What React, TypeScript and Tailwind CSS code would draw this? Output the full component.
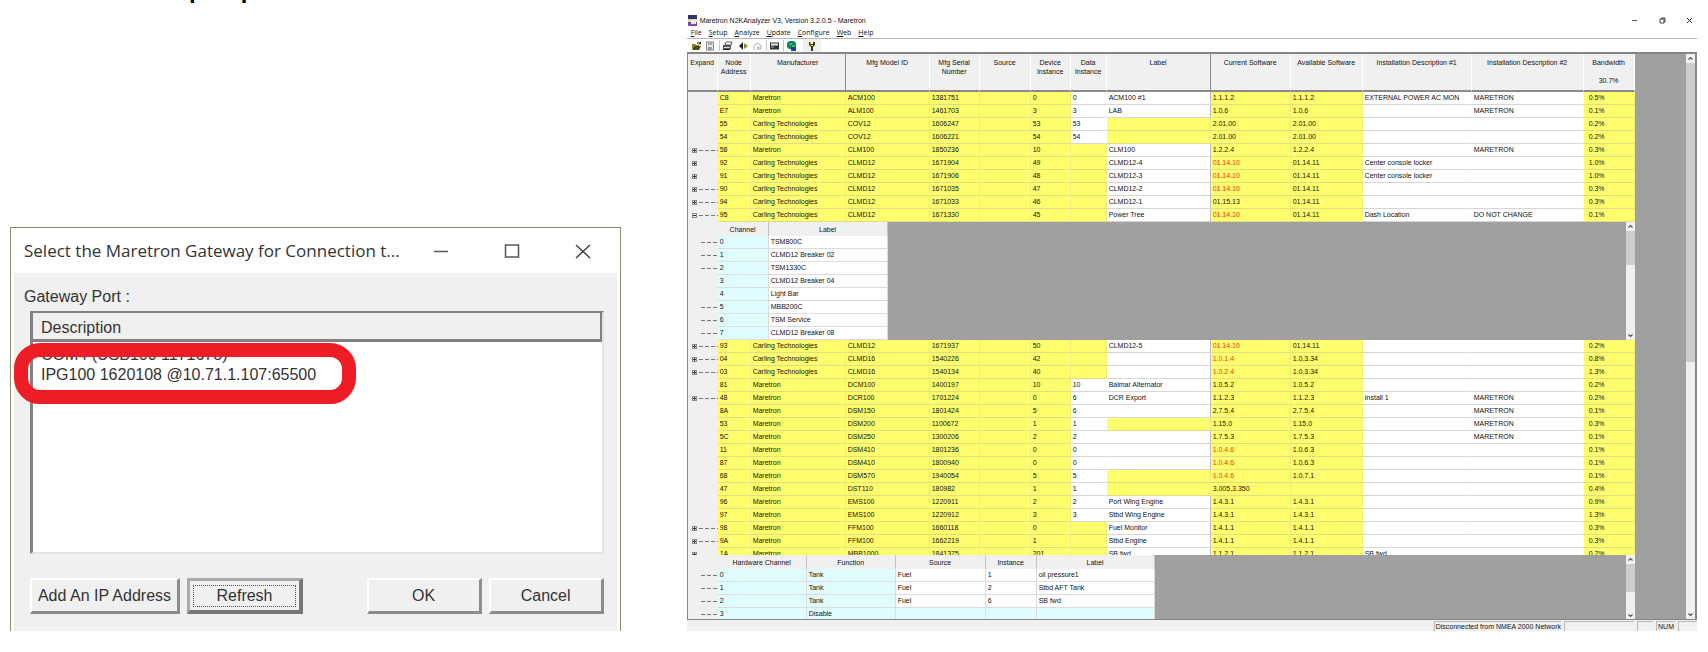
import { useState } from 'react'
import type { ReactNode } from 'react'
import clsx from 'clsx'

interface Device {
  addr: string
  maker: string
  model: string
  serial: string
  device: string
  data: string | null
  label: string | null
  current: string
  available: string
  desc1?: string
  desc2?: string
  bandwidth: string
  outdated?: boolean
  expand?: 'plus' | 'minus'
  line?: boolean
}

const M = 'Maretron'
const C = 'Carling Technologies'

// data / label: null means the field does not apply to the device
const DEVICES_TOP: Device[] = [
  { addr: 'C8', maker: M, model: 'ACM100', serial: '1381751', device: '0', data: '0', label: 'ACM100 #1', current: '1.1.1.2', available: '1.1.1.2', desc1: 'EXTERNAL POWER AC MON', desc2: 'MARETRON', bandwidth: '0.5%' },
  { addr: 'E7', maker: M, model: 'ALM100', serial: '1461703', device: '3', data: '3', label: 'LAB', current: '1.0.6', available: '1.0.6', desc2: 'MARETRON', bandwidth: '0.1%' },
  { addr: '55', maker: C, model: 'COV12', serial: '1606247', device: '53', data: '53', label: null, current: '2.01.00', available: '2.01.00', bandwidth: '0.2%' },
  { addr: '54', maker: C, model: 'COV12', serial: '1606221', device: '54', data: '54', label: null, current: '2.01.00', available: '2.01.00', bandwidth: '0.2%' },
  { addr: '58', maker: M, model: 'CLM100', serial: '1850236', device: '10', data: null, label: 'CLM100', current: '1.2.2.4', available: '1.2.2.4', desc2: 'MARETRON', bandwidth: '0.3%', expand: 'plus', line: true },
  { addr: '92', maker: C, model: 'CLMD12', serial: '1671904', device: '49', data: null, label: 'CLMD12-4', current: '01.14.10', available: '01.14.11', desc1: 'Center console locker', bandwidth: '1.0%', outdated: true, expand: 'plus' },
  { addr: '91', maker: C, model: 'CLMD12', serial: '1671906', device: '48', data: null, label: 'CLMD12-3', current: '01.14.10', available: '01.14.11', desc1: 'Center console locker', bandwidth: '1.0%', outdated: true, expand: 'plus' },
  { addr: '90', maker: C, model: 'CLMD12', serial: '1671035', device: '47', data: null, label: 'CLMD12-2', current: '01.14.10', available: '01.14.11', bandwidth: '0.3%', outdated: true, expand: 'plus', line: true },
  { addr: '94', maker: C, model: 'CLMD12', serial: '1671033', device: '46', data: null, label: 'CLMD12-1', current: '01.15.13', available: '01.14.11', bandwidth: '0.3%', expand: 'plus', line: true },
  { addr: '95', maker: C, model: 'CLMD12', serial: '1671330', device: '45', data: null, label: 'Power Tree', current: '01.14.10', available: '01.14.11', desc1: 'Dash Location', desc2: 'DO NOT CHANGE', bandwidth: '0.1%', outdated: true, expand: 'minus', line: true },
]

const DEVICES_BOTTOM: Device[] = [
  { addr: '93', maker: C, model: 'CLMD12', serial: '1671937', device: '50', data: null, label: 'CLMD12-5', current: '01.14.10', available: '01.14.11', bandwidth: '0.2%', outdated: true, expand: 'plus', line: true },
  { addr: '04', maker: C, model: 'CLMD16', serial: '1540226', device: '42', data: null, label: '', current: '1.0.1.4', available: '1.0.3.34', bandwidth: '0.8%', outdated: true, expand: 'plus', line: true },
  { addr: '03', maker: C, model: 'CLMD16', serial: '1540134', device: '40', data: null, label: '', current: '1.0.2.4', available: '1.0.3.34', bandwidth: '1.3%', outdated: true, expand: 'plus', line: true },
  { addr: '81', maker: M, model: 'DCM100', serial: '1400197', device: '10', data: '10', label: 'Balmar Alternator', current: '1.0.5.2', available: '1.0.5.2', bandwidth: '0.2%' },
  { addr: '48', maker: M, model: 'DCR100', serial: '1701224', device: '0', data: '6', label: 'DCR Export', current: '1.1.2.3', available: '1.1.2.3', desc1: 'Install 1', desc2: 'MARETRON', bandwidth: '0.2%', expand: 'plus', line: true },
  { addr: '8A', maker: M, model: 'DSM150', serial: '1801424', device: '5', data: '6', label: '', current: '2.7.5.4', available: '2.7.5.4', desc2: 'MARETRON', bandwidth: '0.1%' },
  { addr: '53', maker: M, model: 'DSM200', serial: '1100672', device: '1', data: '1', label: null, current: '1.15.0', available: '1.15.0', desc2: 'MARETRON', bandwidth: '0.3%' },
  { addr: '5C', maker: M, model: 'DSM250', serial: '1300206', device: '2', data: '2', label: '', current: '1.7.5.3', available: '1.7.5.3', desc2: 'MARETRON', bandwidth: '0.1%' },
  { addr: '11', maker: M, model: 'DSM410', serial: '1801236', device: '0', data: '0', label: '', current: '1.0.4.6', available: '1.0.6.3', bandwidth: '0.1%', outdated: true },
  { addr: '87', maker: M, model: 'DSM410', serial: '1800940', device: '0', data: '0', label: '', current: '1.0.4.6', available: '1.0.6.3', bandwidth: '0.1%', outdated: true },
  { addr: '68', maker: M, model: 'DSM570', serial: '1940054', device: '5', data: '5', label: null, current: '1.0.4.6', available: '1.0.7.1', bandwidth: '0.1%', outdated: true },
  { addr: '47', maker: M, model: 'DST110', serial: '180982', device: '1', data: '1', label: null, current: '3.005,3.350', available: '', bandwidth: '0.4%' },
  { addr: '96', maker: M, model: 'EMS100', serial: '1220911', device: '2', data: '2', label: 'Port Wing Engine', current: '1.4.3.1', available: '1.4.3.1', bandwidth: '0.9%' },
  { addr: '97', maker: M, model: 'EMS100', serial: '1220912', device: '3', data: '3', label: 'Stbd Wing Engine', current: '1.4.3.1', available: '1.4.3.1', bandwidth: '1.3%' },
  { addr: '98', maker: M, model: 'FFM100', serial: '1660118', device: '0', data: null, label: 'Fuel Monitor', current: '1.4.1.1', available: '1.4.1.1', bandwidth: '0.3%', expand: 'plus', line: true },
  { addr: '9A', maker: M, model: 'FFM100', serial: '1662219', device: '1', data: null, label: 'Stbd Engine', current: '1.4.1.1', available: '1.4.1.1', bandwidth: '0.3%', expand: 'plus', line: true },
  { addr: '1A', maker: M, model: 'MBB1000', serial: '1841375', device: '201', data: null, label: 'SB fwd', current: '1.1.2.1', available: '1.1.2.1', desc1: 'SB fwd', bandwidth: '0.2%', expand: 'plus' },
]

const COLUMNS = [
  { title: 'Expand', width: 'w-[30px]' },
  { title: 'Node Address', width: 'w-[33px]' },
  { title: 'Manufacturer', width: 'w-[95px]', dark: true },
  { title: 'Mfg Model ID', width: 'w-[84px]' },
  { title: 'Mfg Serial Number', width: 'w-[50px]' },
  { title: 'Source', width: 'w-[51px]' },
  { title: 'Device Instance', width: 'w-[40px]' },
  { title: 'Data Instance', width: 'w-[36px]' },
  { title: 'Label', width: 'w-[104px]', dark: true },
  { title: 'Current Software', width: 'w-[80px]' },
  { title: 'Available Software', width: 'w-[72px]' },
  { title: 'Installation Description #1', width: 'w-[109px]' },
  { title: 'Installation Description #2', width: 'w-[112px]' },
  { title: 'Bandwidth', width: 'w-[51px]' },
]

const BREAKERS = ['TSM800C', 'CLMD12 Breaker 02', 'TSM1330C', 'CLMD12 Breaker 04', 'Light Bar', 'MBB200C', 'TSM Service', 'CLMD12 Breaker 08']

const CHANNELS = [
  ['0', 'Tank', 'Fuel', '1', 'oil pressure1'],
  ['1', 'Tank', 'Fuel', '2', 'Stbd AFT Tank'],
  ['2', 'Tank', 'Fuel', '6', 'SB fwd'],
  ['3', 'Disable', '', '', ''],
]

const MENUS = ['File', 'Setup', 'Analyze', 'Update', 'Configure', 'Web', 'Help']
const PORTS = ['COM4 (USB100 1171678)', 'IPG100 1620108 @10.71.1.107:65500']

function Dashes() {
  return <span className="h-px flex-1 bg-[repeating-linear-gradient(90deg,#777_0_4px,transparent_4px_6px)]" />
}

function Expander({ kind, line }: { kind?: 'plus' | 'minus'; line?: boolean }) {
  if (!kind) return null
  return (
    <div className="flex items-center gap-[2px] pl-1">
      <button aria-label={kind === 'plus' ? 'Expand' : 'Collapse'} className="block">
        <svg width="5" height="5" viewBox="0 0 5 5" className="block" shapeRendering="crispEdges">
          <rect x="0" y="0" width="5" height="5" fill="#8a8a8a" />
          <rect x="1" y="1" width="3" height="3" fill="#f0f0f0" />
          <path d={kind === 'plus' ? 'M1 2h3v1H1zM2 1h1v3H2z' : 'M1 2h3v1H1z'} fill="#333" />
        </svg>
      </button>
      {line && <Dashes />}
    </div>
  )
}

function Arrow({ up }: { up?: boolean }) {
  return (
    <svg width="9" height="9" viewBox="0 0 9 9" className="block shrink-0">
      <path d={up ? 'M2.5 5.5l2-2 2 2' : 'M2.5 3.5l2 2 2-2'} fill="none" stroke="#555" strokeWidth="1.2" />
    </svg>
  )
}

function ScrollBar({ thumb }: { thumb: string }) {
  return (
    <div className="flex w-[9px] shrink-0 flex-col bg-[#f0f0f0]">
      <Arrow up />
      <div className={clsx('w-full bg-[#cdcdcd]', thumb)} />
      <div className="flex-1" />
      <Arrow />
    </div>
  )
}

const CELL = 'h-[13px] overflow-hidden border-r border-b border-r-white border-b-[#d6d6d6] p-0 pl-[2px] leading-[12px]'
const LABEL_CELL = 'h-[13px] overflow-hidden border-r border-b border-r-[#bdbdbd] border-b-[#d6d6d6] p-0 pl-[2px] leading-[12px]'
const YELLOW_CELL = 'h-[13px] overflow-hidden border-r border-b border-r-[#eeee78] border-b-[#dede84] bg-[#ffff6e] p-0 pl-[2px] leading-[12px]'

function DeviceRow({ d }: { d: Device }) {
  return (
    <tr>
      <td className="bg-[#f0f0f0] p-0">
        <Expander kind={d.expand} line={d.line} />
      </td>
      <td className={YELLOW_CELL}>{d.addr}</td>
      <td className={YELLOW_CELL}>{d.maker}</td>
      <td className={YELLOW_CELL}>{d.model}</td>
      <td className={YELLOW_CELL}>{d.serial}</td>
      <td className={YELLOW_CELL}></td>
      <td className={YELLOW_CELL}>{d.device}</td>
      <td className={d.data === null ? YELLOW_CELL : CELL}>{d.data}</td>
      <td className={d.label === null ? YELLOW_CELL : LABEL_CELL}>{d.label}</td>
      <td className={clsx(YELLOW_CELL, d.outdated && 'text-[#ff2a1a]')}>{d.current}</td>
      <td className={YELLOW_CELL}>{d.available}</td>
      <td className={CELL}>{d.desc1}</td>
      <td className={CELL}>{d.desc2}</td>
      <td className={YELLOW_CELL}>
        <span className="pl-[3px]">{d.bandwidth}</span>
      </td>
    </tr>
  )
}

function Columns() {
  return (
    <colgroup>
      {COLUMNS.map((c) => (
        <col key={c.title} className={c.width} />
      ))}
    </colgroup>
  )
}

const GRID = 'w-[947px] table-fixed border-separate border-spacing-0 whitespace-nowrap'
const SUB_HEAD = 'h-[14px] border-r border-[#c4c4c4] bg-[#f0f0f0] p-0 text-center font-normal'
const SUB_CELL = 'h-[13px] border-r border-b border-[#dcdcdc] p-0 pl-[2px] leading-[12px]'

function SubGrid({ children, thumb }: { children: ReactNode; thumb: string }) {
  return (
    <div className="flex w-[947px] bg-[#a0a0a0]">
      {children}
      <div className="flex-1" />
      <ScrollBar thumb={thumb} />
    </div>
  )
}

function BreakerGrid() {
  return (
    <SubGrid thumb="h-[34px]">
      <table className="w-[200px] table-fixed border-separate border-spacing-0 whitespace-nowrap">
        <thead>
          <tr>
            <td className="w-[30px] bg-[#f0f0f0] p-0"></td>
            <th className={clsx(SUB_HEAD, 'w-[51px] border-[#808080]')}>Channel</th>
            <th className={SUB_HEAD}>Label</th>
          </tr>
        </thead>
        <tbody>
          {BREAKERS.map((name, i) => (
            <tr key={name}>
              <td className="bg-[#f0f0f0] p-0">
                <div className="flex pr-px pl-[13px]">{i !== 3 && i !== 4 && <Dashes />}</div>
              </td>
              <td className={clsx(SUB_CELL, 'bg-[#dffdff]')}>{i}</td>
              <td className={clsx(SUB_CELL, 'bg-white')}>{name}</td>
            </tr>
          ))}
        </tbody>
      </table>
    </SubGrid>
  )
}

function ChannelGrid() {
  return (
    <SubGrid thumb="h-[28px]">
      <table className="w-[467px] table-fixed border-separate border-spacing-0 whitespace-nowrap">
        <thead>
          <tr>
            <td className="w-[30px] bg-[#f0f0f0] p-0"></td>
            <th className={clsx(SUB_HEAD, 'w-[89px] border-[#808080]')}>Hardware Channel</th>
            <th className={clsx(SUB_HEAD, 'w-[89px]')}>Function</th>
            <th className={clsx(SUB_HEAD, 'w-[90px]')}>Source</th>
            <th className={clsx(SUB_HEAD, 'w-[51px]')}>Instance</th>
            <th className={clsx(SUB_HEAD, 'border-[#808080]')}>Label</th>
          </tr>
        </thead>
        <tbody>
          {CHANNELS.map((row) => (
            <tr key={row[0]}>
              <td className="bg-[#f0f0f0] p-0">
                <div className="flex pr-px pl-[13px]">
                  <Dashes />
                </div>
              </td>
              {row.map((value, i) => (
                <td key={i} className={clsx(SUB_CELL, i < 2 || row[1] === 'Disable' ? 'bg-[#dffdff]' : 'bg-white')}>
                  {value}
                </td>
              ))}
            </tr>
          ))}
        </tbody>
      </table>
    </SubGrid>
  )
}

function ToolButton({ label, children }: { label: string; children: ReactNode }) {
  return (
    <button aria-label={label} className="flex h-[11px] w-[14px] items-center justify-center">
      <svg width="11" height="10" viewBox="0 0 11 10">
        {children}
      </svg>
    </button>
  )
}

function Separator() {
  return <span className="mx-px h-[11px] w-px bg-[#c8c8c8]" />
}

function ToolBar() {
  return (
    <div className="flex h-[13px] items-center pl-[3px]">
      <ToolButton label="Open">
        <path d="M1 3h3l1 1h3v1H3L1 8z" fill="#8a8420" />
        <path d="M3 5h7L8 9H1z" fill="#4d4a10" />
        <path d="M6 2.5q2-2 3.5 0M9.500 1v2h-2" fill="none" stroke="#222" />
      </ToolButton>
      <ToolButton label="Save">
        <rect x="1.500" y="1" width="7" height="8" fill="#e8e8e8" stroke="#8a8a8a" />
        <rect x="3" y="1" width="4" height="3" fill="#aaa" />
        <rect x="3" y="6" width="4" height="3" fill="#999" />
      </ToolButton>
      <Separator />
      <div className="flex gap-[2px]">
        <ToolButton label="Print">
          <path d="M4 1h6L9 4H3z" fill="#fff" stroke="#333" strokeWidth=".8" />
          <path d="M1 4h8v4H1z" fill="#555" />
          <path d="M2 6h6v1H2z" fill="#ddd" />
          <path d="M1 8h7v1H1z" fill="#222" />
        </ToolButton>
        <ToolButton label="Connect">
          <path d="M5 1v8L1 5z" fill="#222" />
          <path d="M6 2l4 3-4 3z" fill="#8c8a2c" />
        </ToolButton>
      </div>
      <ToolButton label="Refresh">
        <path d="M3 8.500A3.500 3.500 0 1 1 8 8.500" fill="none" stroke="#aaa" />
        <path d="M4.500 5.500h3v3.500h-2z" fill="#bbb" />
      </ToolButton>
      <Separator />
      <ToolButton label="Terminal">
        <rect x="1" y="1.500" width="9" height="7" fill="#333" />
        <rect x="2" y="2.500" width="7" height="2" fill="#e8e8e8" />
        <path d="M2 5.500h3v1H2z" fill="#aab" />
      </ToolButton>
      <Separator />
      <ToolButton label="Web update">
        <path d="M3 0h5l2 2v4L8 8H3L1 6V2z" fill="#12806a" />
        <path d="M3 2h3v2H3zM6 4h3v3H6z" fill="#27c24a" />
        <path d="M5 6h5v4H5z" fill="#1b3f9b" />
      </ToolButton>
      <span className="ml-1 flex h-[13px] w-[18px] items-center justify-center bg-[#f0f0f0]">
        <ToolButton label="Help">
          <path d="M3 1h2v2h2V1h2v3L7 6v4H5V6L3 4z" fill="#3c3a10" />
          <path d="M4 1h1v3h2v1H5z" fill="#d8d030" />
        </ToolButton>
      </span>
    </div>
  )
}

const STATUS_BOX = 'h-[10px] border-t border-l border-[#b8b8b8]'

function AnalyzerWindow() {
  return (
    <section className="mt-[14px] min-w-0 flex-[1011] bg-white font-['Liberation_Sans',Arial,sans-serif] text-[7px] leading-[9px] text-[#111]">
      <header className="flex h-[13px] items-center">
        <svg width="9" height="11" viewBox="0 0 9 11" className="mr-[3px] ml-px">
          <rect width="9" height="4" fill="#2c3472" />
          <rect y="4" width="9" height="3" fill="#d9d5b0" />
          <rect y="7" width="9" height="4" fill="#7a4aa8" />
          <rect x="3" y="5" width="5" height="4" fill="#eee" />
        </svg>
        <h2 className="flex-1 whitespace-nowrap">Maretron N2KAnalyzer V3, Version 3.2.0.5 - Maretron</h2>
        <div className="flex w-[66px] items-center justify-between pr-1">
          <button aria-label="Minimize">
            <svg width="7" height="7" viewBox="0 0 7 7"><path d="M1 3.500h5" stroke="#555" /></svg>
          </button>
          <button aria-label="Restore">
            <svg width="7" height="7" viewBox="0 0 7 7"><path d="M1 2h4v4H1zM2.500 2V1H6v4H5" fill="none" stroke="#333" strokeWidth=".9" /></svg>
          </button>
          <button aria-label="Close">
            <svg width="7" height="7" viewBox="0 0 7 7"><path d="M1 1l5 5M6 1L1 6" stroke="#333" /></svg>
          </button>
        </div>
      </header>

      <nav className="flex h-[12px] items-center gap-[7px] border-b border-[#b4b4b4] pl-1">
        {MENUS.map((m) => (
          <button key={m} className="font-['Open_Sans',sans-serif] text-[7px] leading-[9px]">
            <u>{m[0]}</u>
            {m.slice(1)}
          </button>
        ))}
      </nav>

      <ToolBar />

      <div className="flex h-[568px] overflow-hidden border-t-2 border-r-2 border-b border-l border-[#858585] bg-[#a0a0a0]">
        <div className="shrink-0">
          <table className={clsx(GRID, 'bg-white')}>
            <Columns />
            <thead>
              <tr>
                {COLUMNS.map((c) => (
                  <th
                    key={c.title}
                    className={clsx(
                      'h-[38px] border-r border-b-2 border-b-[#8a8a8a] bg-[#f0f0f0] p-0 pt-1 text-center align-top font-normal whitespace-normal',
                      c.dark ? 'border-r-[#8a8a8a]' : 'border-r-white',
                    )}
                  >
                    {c.title}
                    {c.title === 'Bandwidth' && <div className="pt-[9px]">30.7%</div>}
                  </th>
                ))}
              </tr>
            </thead>
            <tbody>
              {DEVICES_TOP.map((d) => (
                <DeviceRow key={d.addr} d={d} />
              ))}
            </tbody>
          </table>
          <BreakerGrid />
          {/* the last row is cut by the channel grid below it */}
          <div className="h-[215px] overflow-hidden">
            <table className={clsx(GRID, 'bg-white')}>
              <Columns />
              <tbody>
                {DEVICES_BOTTOM.map((d) => (
                  <DeviceRow key={d.addr} d={d} />
                ))}
              </tbody>
            </table>
          </div>
          <div className="flex h-[65px] overflow-hidden">
            <ChannelGrid />
          </div>
        </div>
        <div className="flex-1" />
        <ScrollBar thumb="h-[299px]" />
      </div>

      <footer className="flex h-[11px] items-center justify-end gap-[3px] bg-[#f0f0f0]">
        <span className={clsx(STATUS_BOX, 'pl-px whitespace-nowrap')}>Disconnected from NMEA 2000 Network</span>
        <span className={clsx(STATUS_BOX, 'w-[70px]')} />
        <span className={clsx(STATUS_BOX, 'w-[16px]')} />
        <span className={clsx(STATUS_BOX, 'w-[19px] text-center')}>NUM</span>
        <span className={clsx(STATUS_BOX, 'w-[19px]')} />
      </footer>
    </section>
  )
}

const BUTTON =
  'h-[36px] border-t-2 border-l-2 border-r-[3px] border-b-[3px] border-t-white border-l-white border-r-[#8c8c8c] border-b-[#8c8c8c] bg-[#f0f0f0]'

function GatewayDialog() {
  const [selected, setSelected] = useState(PORTS[1])

  return (
    <section className="border border-b-0 border-[#8b8d6c] bg-white px-[3px] font-['Liberation_Sans',Arial,sans-serif] text-base leading-5 text-[#333]">
      <header className="flex h-[45px] items-center pl-[10px]">
        <h1 className="flex-1 truncate font-['Open_Sans',sans-serif] text-[17px]">Select the Maretron Gateway for Connection t...</h1>
        <div className="flex w-[184px] items-center justify-between pr-[26px]">
          <button aria-label="Minimize">
            <svg width="16" height="16" viewBox="0 0 16 16"><path d="M1 8.500h14" stroke="#555" strokeWidth="1.500" /></svg>
          </button>
          <button aria-label="Maximize">
            <svg width="16" height="16" viewBox="0 0 16 16"><rect x="1.500" y="2" width="13" height="12" fill="none" stroke="#555" strokeWidth="1.500" /></svg>
          </button>
          <button aria-label="Close">
            <svg width="16" height="16" viewBox="0 0 16 16"><path d="M1 2l14 13M15 2L1 15" stroke="#444" strokeWidth="1.500" /></svg>
          </button>
        </div>
      </header>

      <div className="bg-[#f0f0f0] pt-[14px] pr-[13px] pb-[17px] pl-4">
        <p id="port-label" className="-ml-[6px] pb-1">Gateway Port :</p>

        <div className="relative h-[243px] border-t-2 border-l-[3px] border-r-2 border-b-2 border-t-[#808080] border-r-[#e4e4e4] border-b-[#e4e4e4] border-l-[#808080] bg-white">
          <table aria-labelledby="port-label" className="w-full">
            <thead>
              <tr>
                <th className="h-[27px] border-r-2 border-b-[3px] border-[#808080] bg-[#f0f0f0] p-0 pt-1 pl-2 text-left font-normal">
                  Description
                </th>
              </tr>
            </thead>
            <tbody className="before:block before:h-[3px]">
              {PORTS.map((port) => (
                <tr key={port} aria-selected={port === selected} onClick={() => setSelected(port)}>
                  <td className="h-5 p-0 pl-2">{port}</td>
                </tr>
              ))}
            </tbody>
          </table>
          <div className="pointer-events-none absolute top-[30px] -left-[19px] h-[61px] w-[342px] rounded-[26px] border-[14px] border-[#ee1c24]" />
        </div>

        <div className="mt-6 flex gap-[7px]">
          <button className={clsx(BUTTON, 'w-[150px] whitespace-nowrap')}>Add An IP Address</button>
          <button className="h-[36px] w-[116px] border-t-[3px] border-l-[3px] border-r-4 border-b-4 border-t-[#aaa] border-l-[#aaa] border-r-[#777] border-b-[#777] bg-[#f0f0f0] p-[3px]">
            <span className="block border border-dotted border-[#555]">Refresh</span>
          </button>
          <div className="flex-1" />
          <button className={clsx(BUTTON, 'w-[115px]')}>OK</button>
          <button className={clsx(BUTTON, 'w-[115px]')}>Cancel</button>
        </div>
      </div>
    </section>
  )
}

export default function App() {
  return (
    <main className="flex items-start gap-[66px] bg-white pr-[11px] pl-[10px]">
      <div className="min-w-0 flex-[611]">
        <div className="mb-[224px] flex h-[3px] items-end gap-[37px] overflow-hidden pl-[179px] font-['Liberation_Sans',Arial,sans-serif] text-2xl leading-6 font-bold text-black">
          <span>p</span>
          <span>p</span>
        </div>
        <GatewayDialog />
      </div>
      <AnalyzerWindow />
    </main>
  )
}
